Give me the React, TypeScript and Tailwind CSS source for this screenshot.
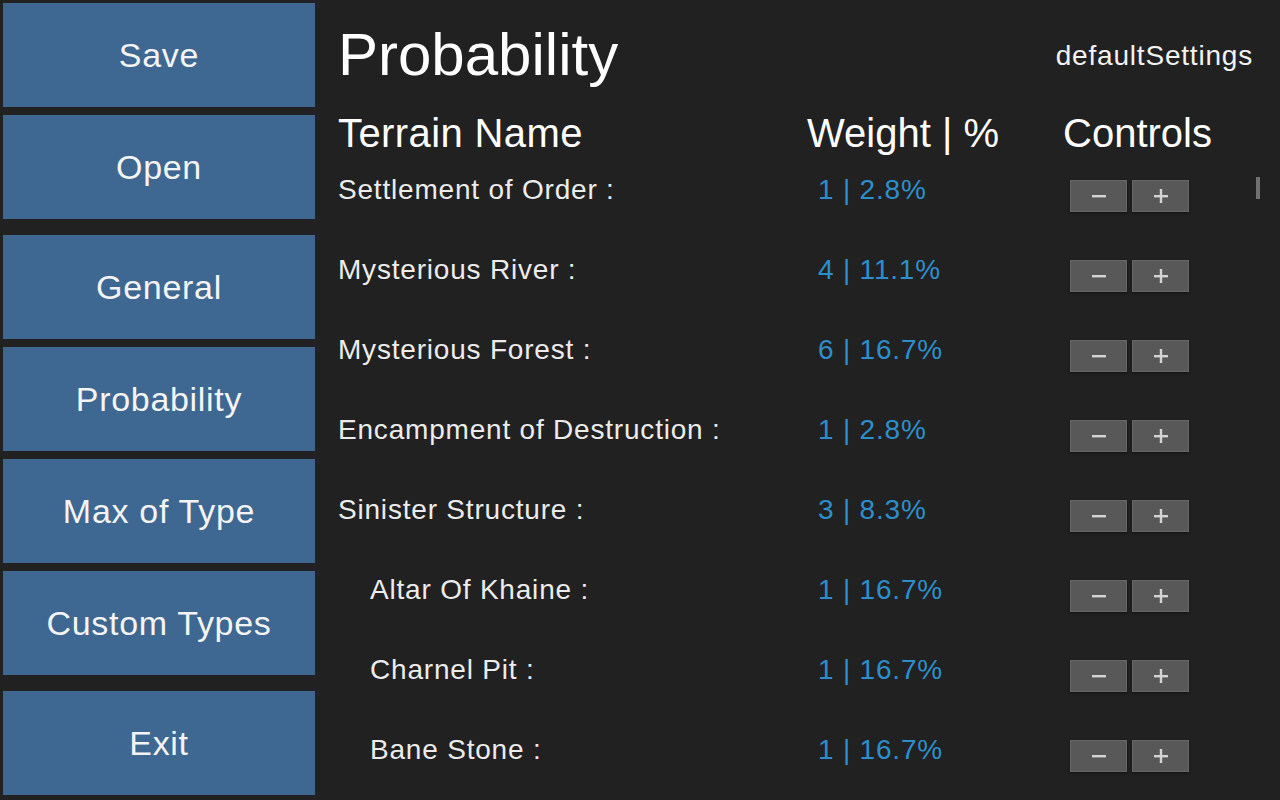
import React from "react";

const navItems = [
  { label: "Save", gap: "mt-[3px]" },
  { label: "Open", gap: "mt-[8px]" },
  { label: "General", gap: "mt-[16px]" },
  { label: "Probability", gap: "mt-[8px]" },
  { label: "Max of Type", gap: "mt-[8px]" },
  { label: "Custom Types", gap: "mt-[8px]" },
  { label: "Exit", gap: "mt-[16px]" },
];

const terrains = [
  { name: "Settlement of Order :", value: "1 | 2.8%", sub: false },
  { name: "Mysterious River :", value: "4 | 11.1%", sub: false },
  { name: "Mysterious Forest :", value: "6 | 16.7%", sub: false },
  { name: "Encampment of Destruction :", value: "1 | 2.8%", sub: false },
  { name: "Sinister Structure :", value: "3 | 8.3%", sub: false },
  { name: "Altar Of Khaine :", value: "1 | 16.7%", sub: true },
  { name: "Charnel Pit :", value: "1 | 16.7%", sub: true },
  { name: "Bane Stone :", value: "1 | 16.7%", sub: true },
];

const StepButton: React.FC<{ plus?: boolean }> = ({ plus }) => (
  <button className="w-[57px] h-[32px] bg-[#585858] border border-[#676767] shadow-[0_1px_2px_rgba(0,0,0,0.5)] flex items-center justify-center">
    <svg width="16" height="16" viewBox="0 0 16 16">
      <rect x="1" y="7" width="14" height="2.4" fill="#d4d4d4" />
      {plus && <rect x="6.8" y="1" width="2.4" height="14" fill="#d4d4d4" />}
    </svg>
  </button>
);

export default function App() {
  return (
    <div
      className="relative flex w-[1280px] h-[800px] overflow-hidden bg-[#212121] text-[#f2f2f2]"
      style={{ fontFamily: '"Liberation Sans", Arial, sans-serif' }}
    >
      <div className="flex flex-col w-[318px] pl-[3px]">
        {navItems.map((item) => (
          <button
            key={item.label}
            className={`${item.gap} w-[312px] h-[104px] bg-[#3e6791] flex items-center justify-center text-[34px] tracking-[0.7px] text-[#f4f4f4]`}
          >
            {item.label}
          </button>
        ))}
      </div>

      <div className="flex-1 flex flex-col pl-[20px] pr-[27px]">
        <div className="h-[110px] flex items-center justify-between">
          <h1 className="text-[60px] leading-[60px] text-white">Probability</h1>
          <span className="text-[28px] leading-[28px] tracking-[0.8px] pt-[2px]">defaultSettings</span>
        </div>

        <div className="h-[40px] flex items-center pt-[6px] text-[40px] leading-[40px] text-white">
          <div className="w-[469px] tracking-[0.4px]">Terrain Name</div>
          <div className="w-[256px]">Weight | %</div>
          <div>Controls</div>
        </div>

        {terrains.map((t) => (
          <div key={t.name} className="h-[80px] flex items-center text-[28px] leading-[28px] tracking-[0.8px]">
            <div className={`w-[480px] ${t.sub ? "pl-[32px]" : ""} text-[#ececec]`}>{t.name}</div>
            <div className="w-[252px] text-[#2c8fcc]">{t.value}</div>
            <div className="flex gap-[5px] mt-[12px]">
              <StepButton />
              <StepButton plus />
            </div>
          </div>
        ))}
      </div>

      <div className="absolute left-[1256px] top-[177px] w-[4px] h-[22px] bg-[#707070]" />
    </div>
  );
}
